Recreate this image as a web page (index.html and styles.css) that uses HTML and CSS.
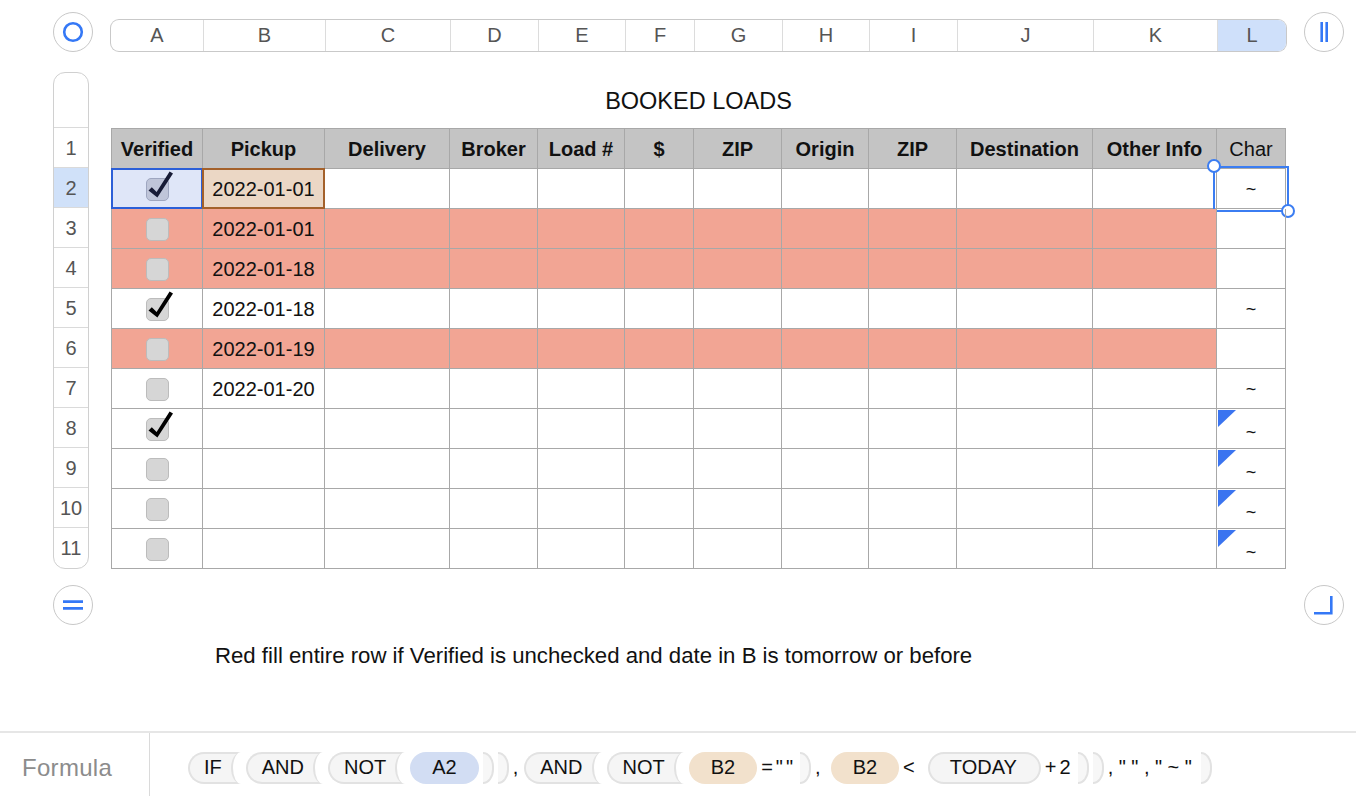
FILE: index.html
```html
<!DOCTYPE html>
<html lang="en">
<head>
    <meta charset="UTF-8">
    <title>Booked Loads</title>
    <link rel="stylesheet" href="styles.css">
</head>
<body>
    <div class="topbar">
        <button class="round">
            <svg width="24" height="24" viewBox="0 0 24 24"><circle cx="12" cy="12" r="8.8" fill="none" stroke="#3478f6" stroke-width="2.6"/></svg>
        </button>
        <div class="colbar">
            <div class="colhead">A</div>
            <div class="colhead">B</div>
            <div class="colhead">C</div>
            <div class="colhead">D</div>
            <div class="colhead">E</div>
            <div class="colhead">F</div>
            <div class="colhead">G</div>
            <div class="colhead">H</div>
            <div class="colhead">I</div>
            <div class="colhead">J</div>
            <div class="colhead">K</div>
            <div class="colhead active">L</div>
        </div>
        <button class="round">
            <svg width="24" height="24" viewBox="0 0 24 24"><path d="M9.7 2v20M14.7 2v20" stroke="#3478f6" stroke-width="2.6"/></svg>
        </button>
    </div>

    <div class="sheet">
        <div class="rownums">
            <div class="rn first"></div>
            <div class="rn">1</div>
            <div class="rn active">2</div>
            <div class="rn">3</div>
            <div class="rn">4</div>
            <div class="rn">5</div>
            <div class="rn">6</div>
            <div class="rn">7</div>
            <div class="rn">8</div>
            <div class="rn">9</div>
            <div class="rn">10</div>
            <div class="rn last">11</div>
        </div>

        <div class="table">
            <div class="title">BOOKED LOADS</div>
            <div class="grid">
                <div class="c h">Verified</div>
                <div class="c h">Pickup</div>
                <div class="c h">Delivery</div>
                <div class="c h">Broker</div>
                <div class="c h">Load #</div>
                <div class="c h">$</div>
                <div class="c h">ZIP</div>
                <div class="c h">Origin</div>
                <div class="c h">ZIP</div>
                <div class="c h">Destination</div>
                <div class="c h">Other Info</div>
                <div class="c h plain">Char</div>

                <!-- row 2 -->
                <div class="row">
                    <div class="c sel-a"><span class="cb on dark"><svg width="26" height="30" viewBox="0 0 26 30"><path d="M0.5 20.5 L3.8 17.3 L8.6 22 L21.6 1.6 L25 3.4 L9.4 27.6 Z"/></svg></span></div>
                    <div class="c sel-b">2022-01-01</div>
                    <div class="c"></div><div class="c"></div><div class="c"></div><div class="c"></div>
                    <div class="c"></div><div class="c"></div><div class="c"></div><div class="c"></div><div class="c"></div>
                    <div class="c l"><span class="tilde">~</span>
                        <span class="selbox"><span class="knob tl"></span><span class="knob br"></span></span>
                    </div>
                </div>

                <!-- row 3 -->
                <div class="row late">
                    <div class="c"><span class="cb"></span></div>
                    <div class="c">2022-01-01</div>
                    <div class="c"></div><div class="c"></div><div class="c"></div><div class="c"></div>
                    <div class="c"></div><div class="c"></div><div class="c"></div><div class="c"></div><div class="c"></div>
                    <div class="c l"></div>
                </div>

                <!-- row 4 -->
                <div class="row late">
                    <div class="c"><span class="cb"></span></div>
                    <div class="c">2022-01-18</div>
                    <div class="c"></div><div class="c"></div><div class="c"></div><div class="c"></div>
                    <div class="c"></div><div class="c"></div><div class="c"></div><div class="c"></div><div class="c"></div>
                    <div class="c l"></div>
                </div>

                <!-- row 5 -->
                <div class="row">
                    <div class="c"><span class="cb on"><svg width="26" height="30" viewBox="0 0 26 30"><path d="M0.5 20.5 L3.8 17.3 L8.6 22 L21.6 1.6 L25 3.4 L9.4 27.6 Z"/></svg></span></div>
                    <div class="c">2022-01-18</div>
                    <div class="c"></div><div class="c"></div><div class="c"></div><div class="c"></div>
                    <div class="c"></div><div class="c"></div><div class="c"></div><div class="c"></div><div class="c"></div>
                    <div class="c l"><span class="tilde">~</span></div>
                </div>

                <!-- row 6 -->
                <div class="row late">
                    <div class="c"><span class="cb"></span></div>
                    <div class="c">2022-01-19</div>
                    <div class="c"></div><div class="c"></div><div class="c"></div><div class="c"></div>
                    <div class="c"></div><div class="c"></div><div class="c"></div><div class="c"></div><div class="c"></div>
                    <div class="c l"></div>
                </div>

                <!-- row 7 -->
                <div class="row">
                    <div class="c"><span class="cb"></span></div>
                    <div class="c">2022-01-20</div>
                    <div class="c"></div><div class="c"></div><div class="c"></div><div class="c"></div>
                    <div class="c"></div><div class="c"></div><div class="c"></div><div class="c"></div><div class="c"></div>
                    <div class="c l"><span class="tilde">~</span></div>
                </div>

                <!-- row 8 -->
                <div class="row">
                    <div class="c"><span class="cb on"><svg width="26" height="30" viewBox="0 0 26 30"><path d="M0.5 20.5 L3.8 17.3 L8.6 22 L21.6 1.6 L25 3.4 L9.4 27.6 Z"/></svg></span></div>
                    <div class="c"></div>
                    <div class="c"></div><div class="c"></div><div class="c"></div><div class="c"></div>
                    <div class="c"></div><div class="c"></div><div class="c"></div><div class="c"></div><div class="c"></div>
                    <div class="c l low"><span class="flag"></span><span class="tilde">~</span></div>
                </div>

                <!-- row 9 -->
                <div class="row">
                    <div class="c"><span class="cb"></span></div>
                    <div class="c"></div>
                    <div class="c"></div><div class="c"></div><div class="c"></div><div class="c"></div>
                    <div class="c"></div><div class="c"></div><div class="c"></div><div class="c"></div><div class="c"></div>
                    <div class="c l low"><span class="flag"></span><span class="tilde">~</span></div>
                </div>

                <!-- row 10 -->
                <div class="row">
                    <div class="c"><span class="cb"></span></div>
                    <div class="c"></div>
                    <div class="c"></div><div class="c"></div><div class="c"></div><div class="c"></div>
                    <div class="c"></div><div class="c"></div><div class="c"></div><div class="c"></div><div class="c"></div>
                    <div class="c l low"><span class="flag"></span><span class="tilde">~</span></div>
                </div>

                <!-- row 11 -->
                <div class="row">
                    <div class="c"><span class="cb"></span></div>
                    <div class="c"></div>
                    <div class="c"></div><div class="c"></div><div class="c"></div><div class="c"></div>
                    <div class="c"></div><div class="c"></div><div class="c"></div><div class="c"></div><div class="c"></div>
                    <div class="c l low"><span class="flag"></span><span class="tilde">~</span></div>
                </div>
            </div>
        </div>
    </div>

    <div class="bottombar">
        <button class="round">
            <svg width="24" height="24" viewBox="0 0 24 24"><path d="M2 8.6h20M2 15.4h20" stroke="#3478f6" stroke-width="2.6"/></svg>
        </button>
        <button class="round">
            <svg width="24" height="24" viewBox="0 0 24 24"><path d="M19.3 3v17.3H2" fill="none" stroke="#3478f6" stroke-width="2.6"/></svg>
        </button>
    </div>

    <p class="note">Red fill entire row if Verified is unchecked and date in B is tomorrow or before</p>

    <div class="formula">
        <div class="flabel">Formula</div>
        <div class="tokens">
            <span class="fn">IF</span>
            <span class="fn">AND</span>
            <span class="fn">NOT</span>
            <span class="ref blue">A2</span>
            <span class="cl"></span><span class="cl"></span>
            <span class="op comma">,</span>
            <span class="fn">AND</span>
            <span class="fn">NOT</span>
            <span class="ref tan">B2</span>
            <span class="op">=""</span>
            <span class="cl"></span>
            <span class="op comma spaced">,</span>
            <span class="ref tan">B2</span>
            <span class="op">&lt;</span>
            <span class="fn solo">TODAY</span>
            <span class="op">+2</span>
            <span class="cl"></span><span class="cl"></span>
            <span class="op wide">,"","~"</span>
            <span class="cl"></span>
        </div>
    </div>
</body>
</html>
```

FILE: styles.css
```css
:root {
    --cols: 91px 122px 125px 88px 87px 69px 88px 87px 88px 136px 124px 69px;
    --blue: #3478f6;
}
body {
    margin: 0;
    width: 1356px;
    height: 796px;
    overflow: hidden;
    background: #fff;
    font-family: "Liberation Sans", Arial, sans-serif;
    color: #111;
    display: flex;
    flex-direction: column;
}
.round {
    width: 40px;
    height: 40px;
    border-radius: 50%;
    border: 1.5px solid #c8c8c8;
    background: #fff;
    padding: 0;
    display: flex;
    align-items: center;
    justify-content: center;
    flex-shrink: 0;
}
.topbar {
    display: flex;
    align-items: flex-start;
    padding: 12px 0 0 53px;
    height: 40px;
}
.colbar {
    display: grid;
    grid-template-columns: 92px 122px 125px 88px 87px 69px 88px 87px 88px 136px 124px 69px;
    margin: 8px 18px 0 18px;
    height: 31px;
    border-radius: 8px;
    box-shadow: 0 0 0 1px #c9c9c9;
    overflow: hidden;
}
.colhead {
    display: flex;
    align-items: center;
    justify-content: center;
    font-size: 20px;
    color: #555;
    border-left: 1px solid #dcdcdc;
}
.colhead:first-child {
    border-left: none;
}
.colhead.active {
    background: #cfe0fa;
}

.sheet {
    display: flex;
    align-items: flex-start;
    margin: 20px 0 0 53px;
    gap: 22px;
}
.rownums {
    width: 34px;
    border: 1px solid #d0d0d0;
    border-radius: 12px;
    overflow: hidden;
}
.rn {
    height: 40px;
    box-sizing: border-box;
    border-bottom: 1px solid #dadada;
    display: flex;
    align-items: center;
    justify-content: center;
    font-size: 20px;
    color: #555;
    padding-top: 1px;
}
.rn.first {
    height: 55px;
}
.rn.last {
    border-bottom: none;
    height: 40px;
}
.rn.active {
    background: #d0e1f9;
}

.table {
    width: 1175px;
}
.title {
    height: 56px;
    display: flex;
    align-items: center;
    justify-content: center;
    font-size: 23.5px;
    padding-top: 2px;
    box-sizing: border-box;
}
.grid {
    display: grid;
    grid-template-columns: var(--cols);
    border-top: 1px solid #a8a8a8;
    border-left: 1px solid #a8a8a8;
}
.row {
    display: contents;
}
.c {
    position: relative;
    height: 40px;
    box-sizing: border-box;
    border-right: 1px solid #a8a8a8;
    border-bottom: 1px solid #a8a8a8;
    display: flex;
    align-items: center;
    justify-content: center;
    font-size: 20px;
    padding-top: 2px;
}
.c.h {
    background: #c4c4c4;
    font-weight: bold;
}
.c.h.plain {
    font-weight: normal;
}
.row.late .c:not(.l) {
    background: #f2a594;
}
.sel-a {
    background: #dfe6f8;
}
.sel-a::after,
.sel-b::after {
    content: "";
    position: absolute;
    left: -1px;
    top: -1px;
    right: -1px;
    bottom: -1px;
    border: 2px solid #2c5fd7;
}
.sel-b {
    background: #ebd7c5;
}
.sel-b::after {
    border-color: #a4612b;
}

.cb {
    position: relative;
    width: 23px;
    height: 23px;
    box-sizing: border-box;
    border-radius: 5px;
    background: #d6d6d6;
    border: 1px solid #bcbcbc;
}
.cb svg {
    position: absolute;
    left: 1px;
    top: -9px;
    fill: #000;
}
.cb.dark {
    background: #bfc5d9;
    border-color: #9ea6c0;
}
.cb.dark svg {
    fill: #171b36;
}

.tilde {
    font-size: 18px;
}
.c.low {
    padding-top: 7px;
}
.flag {
    position: absolute;
    left: 1px;
    top: 1px;
    width: 0;
    height: 0;
    border-top: 17px solid #3a74f0;
    border-right: 18px solid transparent;
}
.selbox {
    position: absolute;
    left: -4px;
    top: -3px;
    right: -4px;
    bottom: -4px;
    border: 2px solid #3b7df2;
}
.knob {
    position: absolute;
    width: 10px;
    height: 10px;
    border-radius: 50%;
    background: #fff;
    border: 2px solid #3b7df2;
}
.knob.tl {
    left: -8px;
    top: -9px;
}
.knob.br {
    right: -8px;
    bottom: -8px;
}

.bottombar {
    display: flex;
    justify-content: space-between;
    padding: 0 12px 0 53px;
    margin-top: 16px;
}
.note {
    margin: 19px 0 0 215px;
    font-size: 22.2px;
    line-height: 24px;
}

.formula {
    margin-top: auto;
    height: 63px;
    border-top: 2px solid #e6e6e6;
    display: flex;
    align-items: stretch;
}
.flabel {
    width: 127px;
    padding-left: 22px;
    border-right: 1px solid #dadada;
    display: flex;
    align-items: center;
    font-size: 24px;
    letter-spacing: 0.3px;
    color: #8c8c8c;
    padding-top: 6px;
}
.tokens {
    display: flex;
    align-items: center;
    gap: 4px;
    margin-left: 38px;
    padding-top: 6px;
    font-size: 20px;
}
.fn {
    position: relative;
    height: 32px;
    box-sizing: border-box;
    display: inline-flex;
    align-items: center;
    padding: 0 20px 0 14px;
    background: #f5f5f5;
    border: 2px solid #e2e2e2;
    border-right: none;
    border-radius: 16px 0 0 16px;
}
.fn::after {
    content: "";
    position: absolute;
    right: -1px;
    top: -2px;
    bottom: -2px;
    width: 10px;
    background: #fff;
    border-left: 2px solid #e2e2e2;
    border-radius: 10px 0 0 10px / 16px 0 0 16px;
}
.fn.solo {
    padding: 0 22px 0 20px;
    border-right: 2px solid #e2e2e2;
    border-radius: 16px;
    margin-left: 6px;
}
.fn.solo::after {
    display: none;
}
.ref {
    height: 32px;
    display: inline-flex;
    align-items: center;
    padding: 0 22px;
    border-radius: 16px;
}
.ref.blue {
    background: #d2ddf3;
}
.ref.tan {
    background: #f2e1cc;
}
.cl {
    width: 11px;
    height: 32px;
    box-sizing: border-box;
    background: #f7f7f7;
    border: 2px solid #e2e2e2;
    border-left: none;
    border-radius: 0 12px 12px 0 / 0 16px 16px 0;
}
.op {
    white-space: pre;
    letter-spacing: 3px;
}
.op.comma {
    letter-spacing: 2px;
}
.op.spaced {
    margin-right: 4px;
}
.op.wide {
    letter-spacing: 5.5px;
}
```
